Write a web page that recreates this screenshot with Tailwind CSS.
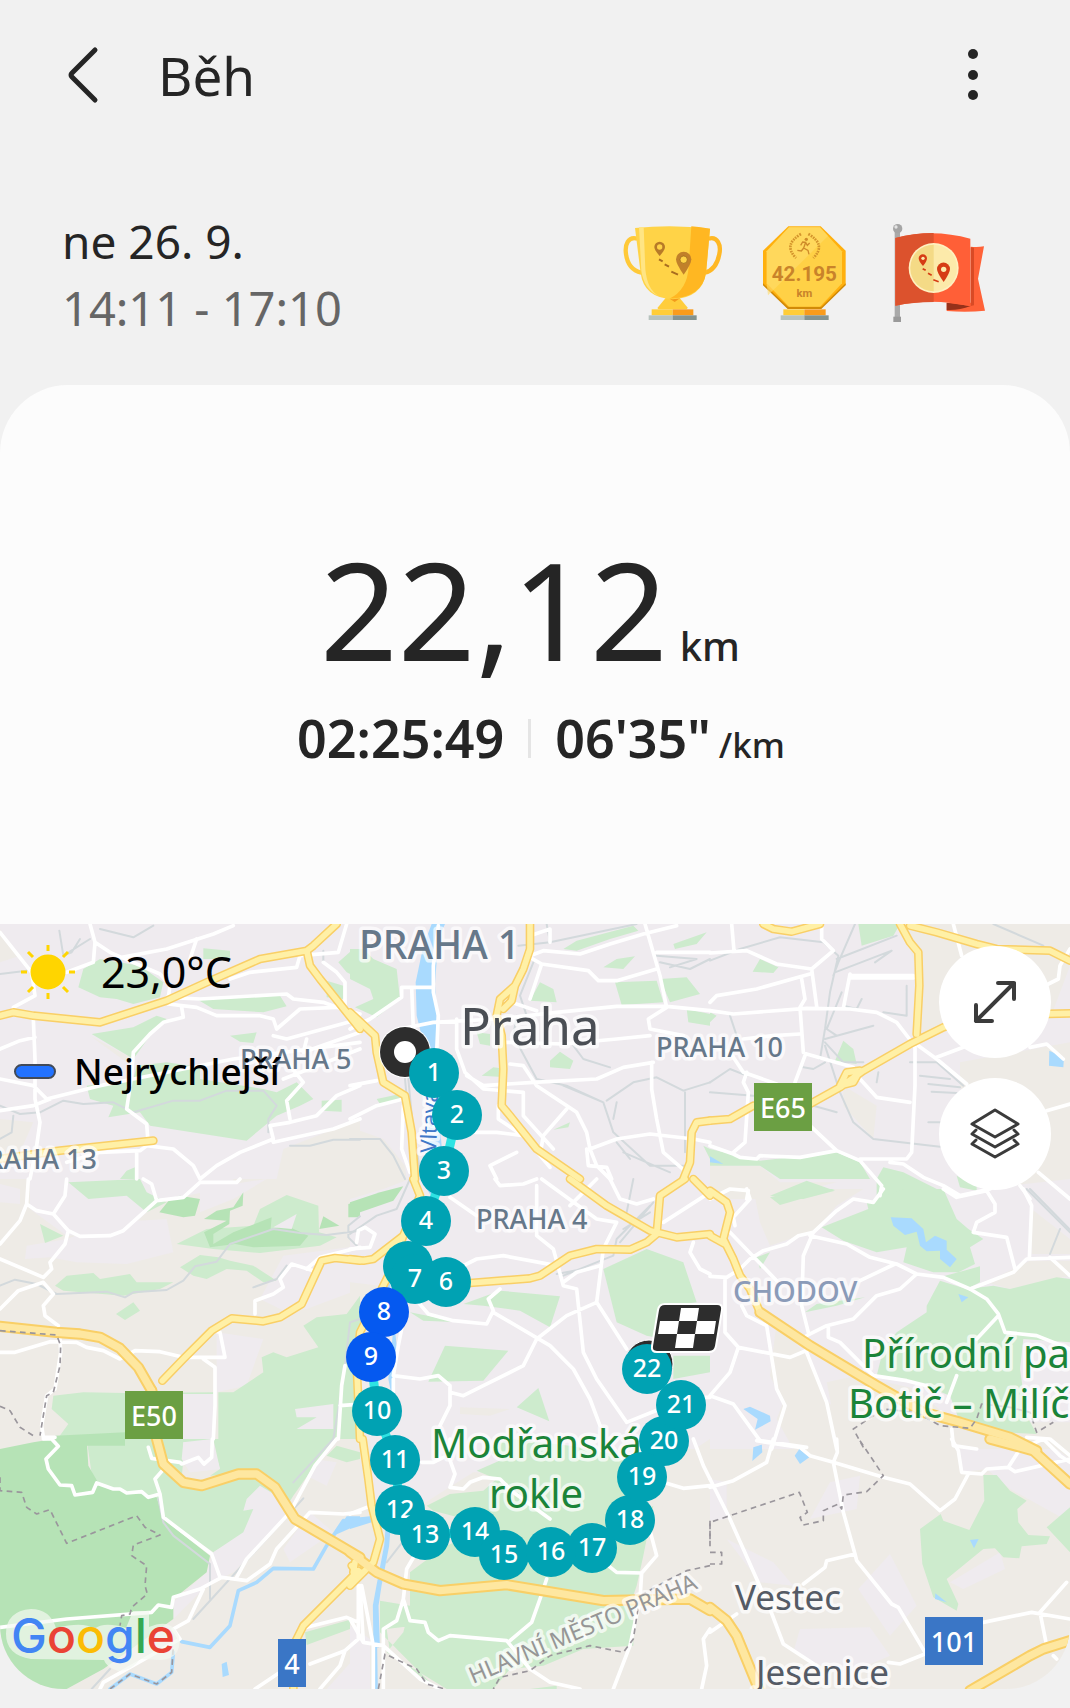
<!DOCTYPE html>
<html lang="cs">
<head>
    <meta charset="UTF-8">
    <meta name="viewport" content="width=device-width, initial-scale=1.0">
    <title>Běh</title>
    <script src="https://cdn.jsdelivr.net/npm/@tailwindcss/browser@4"></script>
</head>
<body class="bg-[#f1f1f1] font-['Noto_Sans',sans-serif] text-[#252525]">
    <header class="flex items-center pt-[33px] pl-14 pr-[59px]">
        <button type="button" aria-label="Zpět" class="flex h-[86px] w-[54px] items-center justify-center">
            <svg class="h-[60px] w-[40px]" viewBox="0 0 40 60" fill="none" stroke="#252525" stroke-width="5" stroke-linecap="round" stroke-linejoin="round"><path d="M32 4L9 27Q7 29 9 31L32 54"/></svg>
        </button>
        <h1 class="ml-12 flex-1 text-[53px] leading-[86px]">Běh</h1>
        <button type="button" aria-label="Další možnosti" class="flex h-[86px] w-[76px] items-center justify-center">
            <svg class="h-[60px] w-3" viewBox="0 0 12 60" fill="#252525"><circle cx="6" cy="8" r="5"/><circle cx="6" cy="29" r="5"/><circle cx="6" cy="49" r="5"/></svg>
        </button>
    </header>

    <section class="flex items-start justify-between pt-[89px] pb-[43px] pl-[62px] pr-[78px]">
        <div class="leading-[67px]">
            <p class="text-[46px]">ne 26. 9.</p>
            <p class="text-[47px] text-[#666666]">14:11 - 17:10</p>
        </div>
        <div class="mt-3 flex gap-[30px]">
            <!-- trophy -->
            <svg class="size-[104px]" viewBox="60 60 312 312">
                <path d="M112 116C84 108 74 134 78 162C82 194 98 212 124 218" fill="none" stroke="#ffc938" stroke-width="13"/>
                <path d="M326 116C352 108 364 134 358 162C352 194 340 212 314 218" fill="none" stroke="#ffb824" stroke-width="13"/>
                <path d="M200 290H236L262 322Q264 328 256 328H180Q170 328 174 322z" fill="#ffcd3c"/>
                <path d="M202 292H244L224 306z" fill="#f29a1c"/>
                <path d="M105 84Q218 72 330 86L318 220Q306 294 218 298Q132 294 122 220z" fill="#ffd347"/>
                <path d="M274 79Q304 81 330 86L318 220Q306 294 208 296Q262 270 266 200z" fill="#ffb722"/>
                <path d="M117 82L131 81 136 208Q142 270 176 288Q132 268 124 212z" fill="#ffe584"/>
                <path d="M155 328H218V346H155z" fill="#ffcd38"/>
                <path d="M218 328H280V346H218z" fill="#f99b1c"/>
                <path d="M146 346H218V360H146z" fill="#b7c3bf"/>
                <path d="M218 346H290V360H218z" fill="#849390"/>
                <path d="M179 168Q163 150 163 141A16 16 0 0 1 195 141Q195 150 179 168z" fill="#b77a28"/>
                <circle cx="179" cy="141" r="8" fill="#ffd347"/>
                <path d="M251 224Q228 192 228 178A23 23 0 0 1 274 178Q274 192 251 224z" fill="#c1802a"/>
                <circle cx="251" cy="179" r="11" fill="#ffd347" stroke="#8f5d1a" stroke-width="2"/>
                <path d="M177 178L188 184M194 193L207 200M214 215L234 224" stroke="#a86d20" stroke-width="6"/>
            </svg>
            <!-- marathon badge -->
            <svg class="size-[104px]" viewBox="462 60 312 312">
                <path d="M565 79H662L737 152V254L664 324H563L489 254V152z" fill="#ffb00e"/>
                <path d="M489 250L564 320H664L737 250V256L664 327H563L489 256z" fill="#d18a08"/>
                <path d="M567 82H660L726 154V250L660 320H567L500 250V154z" fill="#ffd146"/>
                <path d="M567 82H660L684 108 504 286 500 250V154z" fill="#ffdc6b" opacity=".6"/>
                <path d="M603 102Q548 134 588 174M625 102Q680 134 640 174" fill="none" stroke="#d4942c" stroke-width="8" stroke-dasharray="5 3"/>
                <circle cx="619" cy="118" r="5" fill="#cf8b29"/>
                <path d="M602 136L608 126 617 127 611 144 624 151 627 163M611 144L604 153 592 151M617 128L622 136 629 129" fill="none" stroke="#cf8b29" stroke-width="4"/>
                <text x="613" y="242" text-anchor="middle" class="fill-[#c9832a] font-['Roboto',sans-serif] text-[62px] font-bold">42.195</text>
                <text x="613" y="290" text-anchor="middle" class="fill-[#c9832a] font-['Roboto',sans-serif] text-[34px] font-bold">km</text>
                <path d="M550 328H613V346H550z" fill="#ffcd38"/>
                <path d="M613 328H677V346H613z" fill="#f99b1c"/>
                <path d="M542 346H613V360H542z" fill="#b7c3bf"/>
                <path d="M613 346H686V360H613z" fill="#849390"/>
            </svg>
            <!-- route flag -->
            <svg class="size-[104px]" viewBox="864 60 312 312">
                <path d="M884 92H900V352H884z" fill="#a9a9a9"/>
                <path d="M880 350H903V366H880z" fill="#9a9a9a"/>
                <circle cx="893" cy="86" r="14" fill="#a5a5a5"/>
                <circle cx="888" cy="81" r="5" fill="#e4e4e4"/>
                <path d="M1112 140Q1132 143 1152 139L1134 236 1155 332Q1100 338 1040 333V308H1112z" fill="#ff6238"/>
                <path d="M1112 142L1122 143V316L1112 318z" fill="#d94a25"/>
                <path d="M1040 308L1112 318Q1076 332 1040 330z" fill="#96311a"/>
                <path d="M886 114Q998 84 1111 116V319Q998 292 886 317z" fill="#ff5f37"/>
                <path d="M886 114Q940 99 1001 99V306Q940 306 886 317z" fill="#dc522d"/>
                <circle cx="1001" cy="204" r="75" fill="#fff0c0"/>
                <circle cx="1001" cy="204" r="70" fill="#fceaaa"/>
                <path d="M1001 134A70 70 0 0 0 1001 274z" fill="#f4da86"/>
                <path d="M969 198Q956 184 956 175A12 12 0 0 1 981 175Q981 184 969 198z" fill="#d63c14"/>
                <circle cx="969" cy="175" r="5" fill="#fceaaa"/>
                <path d="M1031 246Q1011 218 1011 207A19 19 0 0 1 1050 207Q1050 218 1031 246z" fill="#d63c14"/>
                <circle cx="1031" cy="208" r="8" fill="#fceaaa"/>
                <path d="M968 206L977 211M984 220L995 226M1000 239L1016 245" stroke="#d63c14" stroke-width="5"/>
            </svg>
        </div>
    </section>

    <main>
        <section class="flex flex-col items-center rounded-t-[68px] bg-[#fcfcfc] pt-[156px] pb-[150px]">
            <p class="flex items-baseline pr-[10px] leading-[136px]">
                <span class="text-[136px]">22,12</span>
                <span class="ml-3 text-[40px] leading-none font-medium">km</span>
            </p>
            <p class="mt-[25px] flex items-baseline pl-3 text-[52px] leading-[72px] font-semibold">
                <span>02:25:49</span>
                <span class="mx-6 h-[39px] w-[3px] bg-[#e5e5e5]"></span>
                <span>06'35"</span>
                <span class="ml-2 text-[35px] leading-none font-medium">/km</span>
            </p>
        </section>

        <section class="relative overflow-hidden rounded-b-[64px] bg-[#eeebe6]">
            <svg id="map" class="block h-auto w-full" viewBox="0 925 1070 765" role="img" aria-label="Mapa trasy">
                <g id="terrain"></g>
                <g id="labels"></g>
                <g id="route">
                    <path d="M405 1053L434 1074 457 1116 444 1172 426 1222 408 1267 446 1283 416 1280 384 1313 371 1358 377 1412 395 1461 400 1511 425 1536 475 1533 504 1556 551 1553 592 1549 630 1521 642 1478 664 1442 681 1406 647 1370" fill="none" stroke="#2ee3e3" stroke-width="9"/>
                    <circle cx="405" cy="1053" r="26" fill="#fff"/>
                    <circle cx="405" cy="1053" r="25" fill="#2d2d2d"/>
                    <circle cx="405" cy="1053" r="11" fill="#fff"/>
                    <circle cx="649" cy="1365" r="24" fill="#2d2d2d" stroke="#fff" stroke-width="1"/>
                </g>
                <g id="markers"></g>
                <!-- finish flag -->
                <path d="M665 1305H717Q723 1305 722 1311L716 1347Q715 1353 709 1353H657Q651 1353 652 1347L658 1311Q659 1305 665 1305z" fill="#2d2d2d" stroke="#fff" stroke-width="2"/>
                <path d="M681 1309H699L697 1322H679zM660 1322H679L677 1335H658zM697 1322H716L714 1335H695zM677 1335H695L693 1349H675z" fill="#fff"/>
                <!-- halo under the logo -->
                <g fill="#f3f8f1" fill-opacity=".7"><path d="M31 1610Q50 1610 56 1629Q84 1622 94 1630Q104 1622 126 1629L133 1612H149V1628Q172 1618 179 1638Q182 1660 160 1661L140 1660Q132 1672 118 1672Q106 1668 104 1661L31 1660Q6 1656 6 1635Q6 1612 31 1610z"/></g>
                <text x="11" y="1654" class="font-['Inter',sans-serif] text-[48px] font-medium"><tspan fill="#4285f4">G</tspan><tspan fill="#ea4335">o</tspan><tspan fill="#fbbc05">o</tspan><tspan fill="#4285f4">g</tspan><tspan fill="#34a853">l</tspan><tspan fill="#ea4335">e</tspan></text>
            </svg>

            <div class="absolute top-4 left-5 flex items-center gap-[25px] text-[43px] leading-[64px] text-black">
                <svg class="size-14" viewBox="0 0 56 56" fill="#ffd500" stroke="#ffd500" stroke-width="3"><circle cx="28" cy="28" r="16"/><path d="M28 1v6M28 49v6M1 28h6M49 28h6M8 8l5 5M43 43l5 5M8 48l5-5M43 13l5-5"/></svg>
                <span>23,0°C</span>
            </div>
            <div class="absolute top-[117px] left-[14px] flex items-center gap-[18px] text-[37px] leading-[60px] font-medium text-black">
                <span class="h-[15px] w-[42px] rounded-full border-2 border-[#424a58] bg-[#2272ff]"></span>
                <span>Nejrychlejší</span>
            </div>
            <div class="absolute top-[22px] right-[19px] flex flex-col gap-5">
                <button type="button" aria-label="Zvětšit mapu" class="flex size-28 items-center justify-center rounded-full bg-white">
                    <svg class="size-12" viewBox="0 0 48 48" fill="none" stroke="#3b3b3b" stroke-width="4" stroke-linecap="round" stroke-linejoin="round"><path d="M5 43L43 5M27 5H43V21M5 27V43H21"/></svg>
                </button>
                <button type="button" aria-label="Vrstvy mapy" class="flex size-28 items-center justify-center rounded-full bg-white">
                    <svg class="size-[52px]" viewBox="0 0 52 52" fill="none" stroke="#3b3b3b" stroke-width="3" stroke-linejoin="round" stroke-linecap="round"><path d="M26 2L49 16 26 29 3 16z"/><path d="M7 22L3 26 26 39 49 26 45 22M7 32L3 36 26 49 49 36 45 32"/></svg>
                </button>
            </div>
        </section>
    </main>
    <footer class="h-[18px]"></footer>

    <script>
        // every tile is drawn at three times the map scale, x and y are its corner on the map
        const tiles = [
            {
                x: 0, y: 920,
                town: 'M0 0H1080V780H0z',
                field: 'M830 780L850 690 1080 600V780zM0 600L100 610 60 700 0 720zM0 30L60 110 0 130zM270 350L400 420 380 430z',
                park: 'M250 150L300 120 420 140 490 190 480 235 400 255 350 240 300 235 235 205zM610 88L690 95 690 120 610 120zM590 240L840 230 860 262 790 280 640 270zM275 345L400 325 470 290 500 300 450 350 400 420zM410 440L500 430 600 445 600 480 790 510 830 520 890 490 940 540 900 560 830 590 740 665 450 620 420 580 325 595 340 560 270 540 260 500 400 480zM690 350L770 340 760 372 720 368zM965 545L1025 542 1025 578 965 575zM1015 130L1060 90 1080 95V180L1040 160zM980 185L1030 200V240L980 235zM360 780L380 755 405 745V780z',
                rail: 'M178 35L190 110 215 100 240 60M190 110L270 60M0 165L80 155M300 30L400 55 460 20M0 560L60 585 120 580 190 545 250 555 340 550 400 580 520 545 600 545 680 515 790 515 830 560 805 600V640M870 680L930 680 1000 662H1080M0 660L35 640 40 590M970 95V130',
                street: 'M0 40L95 160 105 230 40 265M270 15L285 70 280 130 200 160M285 70L330 100 365 115 480 165 510 200 505 235M365 115L500 90 640 45 700 20M590 60L570 120M500 235L600 240 860 225 880 240 970 250 1010 265 1080 285M505 255L590 265 650 290 780 290 820 300 830 330 900 270 1010 265M545 265L550 295 490 310 450 345 400 400 395 470 380 570 440 615 445 680M0 390L60 365 105 355M100 300L105 420 105 540 120 610 110 680 90 780M0 480L100 500 140 540 300 500 400 480 700 420 1080 370M0 575L100 560 150 540M820 350L860 360 1080 300M1040 15L1015 100 900 110 890 145 750 160 690 180M970 130L1010 160 1035 190 1035 265M1080 500L1010 530 950 590 870 610 810 620 820 660 720 700 650 740 600 780M820 670L1000 630 1080 600M870 440L910 490 860 545 870 600M200 730L300 700 420 695 440 680 520 690 580 740 600 780M410 695V780M920 360L910 400 1080 340M850 480L1080 390',
                road: 'M0 290L40 280 100 290 300 310 500 245 620 190 780 120 920 95 940 80 1010 15M920 95L930 140 960 180 1080 330M0 720L180 695 460 665'
            },
            {
                x: 350, y: 920,
                town: 'M0 0H1080V780H0z',
                field: 'M0 625L100 660 165 740 170 780H0z',
                park: 'M0 90L40 90 70 120 140 150 150 240 80 295 15 265 70 240 60 210 0 180zM640 90L680 65 850 20 865 35 780 60 680 95zM970 75L1070 40 1040 75 975 90zM760 145L800 120 855 112 820 150zM795 190L920 185 940 250 815 258zM930 180L1010 175 1050 225 960 250zM1010 270L1080 285V320L1015 310zM570 190L610 210 620 250 540 245zM600 425L630 398 670 425 660 450 600 445zM395 470L430 445 470 450V475zM610 632L660 610 655 625zM380 340L420 345 420 380 390 375zM80 540L150 525 160 545 90 555zM1060 680L1080 690V720z',
                water: 'M245 15H285L265 60 255 195 260 290 258 400 262 540 275 680 280 780H225L235 640 240 540 225 390 200 290 197 190 220 80z',
                rail: 'M550 130L510 230 530 290M500 290L490 350 560 480 650 500 760 550 790 640 900 740 1000 740M640 500L760 550M505 80L600 70 860 15M590 15L600 70M670 380L700 420 780 445M770 545L850 490 920 475 1000 515 1080 490M1005 520V700M920 110L1040 120 960 145M930 130L1020 150 1080 120M165 480L180 640 205 780M175 480L190 640 215 780M0 660H90L130 710 165 780M820 700L960 760M800 670L840 720M800 550L790 600',
                street: 'M540 110L580 95 690 105 780 75 880 45 980 20M540 115L575 135 715 155 745 185 800 185 920 150M575 135L540 240M885 15L930 170 950 265M920 100H1080M0 330L60 300 155 235 155 205H250M185 205L190 330M265 20L250 140V220L265 290 260 400M150 330L250 310 440 300 620 280 800 262 950 262 1080 275M950 265L895 300 900 330 1000 350M470 245L560 275M320 300L320 390 345 460 400 510 520 520 520 590 610 690M470 370L640 375 800 360 900 350M480 435L520 440 560 500 680 580 710 640 720 690 740 740 780 780M0 500L80 485M350 470L400 500 550 490 740 480 820 445 910 430M905 430V510L920 600 940 700 1010 760M375 640H440L520 650M650 570L580 650 570 710M0 600L80 560 160 540M720 690L800 660 900 645 1030 660M445 560V600L520 650 600 745M420 740L500 700M420 740L440 780M710 690L715 740 770 745 785 780M600 70V30L540 50M160 560L155 690 180 760M1030 660L1080 670',
                road: 'M540 15V90L520 150 495 200 450 240 440 290 455 350 460 450 455 560 480 590 560 690 690 780M495 200L485 245 460 270M0 280L75 350 80 400 100 490 165 530 185 640 195 780M1080 605L1040 610 1025 640 1020 730 1000 780'
            },
            {
                x: 710, y: 920,
                town: 'M0 0H1080V840H0z',
                field: 'M570 15H1080V140L1020 300 700 310 630 350 640 200zM750 430L1080 370V780L900 800 750 500zM400 500L500 560 490 660 400 560zM0 740L150 740 210 790 380 790 180 840H0z',
                park: 'M445 15H570L550 50 455 80zM150 120L205 145 190 162 128 158zM400 365L430 390 440 435 375 425zM0 280L20 290 0 310zM0 690L150 725 380 700 450 730 480 780 390 780 210 780 150 740 0 740zM180 830L290 785 375 815 280 840zM520 745L580 760 700 820 700 840H500V780zM740 770L800 800V815L750 805z',
                water: 'M0 712L40 735 0 730zM1018 395L1062 415 1060 445 1017 440z',
                rail: 'M0 125L90 90 210 55 340 70 385 110 360 220 345 330 330 420M435 15L385 130 370 170M375 160L545 95 495 130M380 120L560 50M850 15L1000 80M600 430H680L760 500M630 470L720 480M655 495L750 505M665 518L740 522M345 360L490 320M345 370L400 430 460 430M60 290L90 380M345 380L390 520 430 610 490 660 690 683M590 200V290L520 280M395 220L350 330 380 350M0 520L130 530M0 490L60 450 110 470M310 560L380 580M280 445L310 450 345 430M455 240L440 270 400 260M505 460L500 490M655 610H690',
                street: 'M65 15L72 95M0 102L110 95 200 135 305 150 370 95 335 60V15M0 250L20 230 140 210 300 165M305 150L320 262M275 180L285 240 270 265M0 275L70 285 290 268 420 270 500 280 560 310 610 375M400 268L420 165M420 170H610M420 177H610M270 265L280 400 290 405 430 445M100 360L190 350 270 345M285 410L255 490M0 380L60 400 100 460 200 495M110 460L100 490 115 520 105 670 70 700M450 480L500 535 600 550M625 380L680 420 770 495M615 385V500L605 700 590 720 450 720M0 680L70 705 90 715 140 720 150 710 270 715 380 695 300 620M380 695L450 725 515 800 510 830M540 730L580 735 640 775 700 800 750 830 840 810M680 415L760 385M960 385L1010 375 1060 420M730 15L755 110M1010 575L1080 555M1015 195L1045 180 1050 140 1080 90M985 760L1080 840M930 800L960 840M0 840L60 810 115 815 110 840',
                road: 'M160 15L190 30 245 38 330 15M570 15L600 70 625 100 628 200 620 345M600 20L680 40 800 75 860 90 1020 95 1080 125M0 605L60 600 130 560M300 555L390 505 460 455 600 375 700 325 800 290 1080 283M390 500L410 460 450 455 430 490z'
            },
            {
                x: 0, y: 1180,
                town: 'M90 0H700V20L470 70 380 160 200 170 90 90zM340 130L500 120 520 220 380 255 230 250 150 235 75 240 80 200 200 180zM600 30L800 0 700 60 600 100zM850 230L1080 200V330L920 390 860 400 780 360zM650 460L790 480 740 620 650 640zM0 15L60 30 60 75 0 70z',
                park: 'M205 10L420 0 440 40 500 70 440 100 380 50 265 60zM120 135L190 170 135 192zM165 320L200 290 280 282 300 300 390 285 410 310 520 310 480 330 370 350 190 335zM540 265L600 228 655 235 690 245 760 260 830 305 790 310 740 275 680 270 620 300 580 290zM530 195L620 150 760 140 780 90 860 48 955 80 957 160 1010 175 960 200 780 222 640 210zM348 405L400 370 420 395 375 423zM910 440L950 415 1040 405 1080 350V780H655V640L700 640 790 580 785 535 820 520 860 535 955 505zM160 650L250 640 375 642 640 640V790H165L205 735 155 690z',
                forest: 'M478 100L510 60 540 50 600 60 585 110 550 115zM612 120L650 95 700 85 730 40 728 80 690 95 688 135 640 165 640 195 700 160 815 115 812 150 860 140 925 170 900 200 760 205 705 195 630 205 612 160 680 125zM958 150L970 112 1018 140zM1045 75L1080 65V115H1045zM165 770L375 760V800H165z',
                yard: 'M885 690L1000 675 1000 750 890 750 950 715 890 715zM380 645H640V780H500L380 760zM820 145L890 105 875 150z',
                rail: 'M0 320L45 302 110 315 170 345 320 338 375 355 400 340 500 333 550 305 585 262 650 248 690 195 820 150 900 162 980 168 1080 155M760 325L830 300 860 260M1045 175V140L1080 112M1045 175L1070 200M1080 420L1050 430 1030 600 1000 780',
                street: 'M85 0L80 75 60 125 0 195M80 75L110 95 160 105 205 155 195 195 150 250 155 270 130 295 0 240M160 105L195 50 200 0M205 155L240 172 330 170 370 155 470 65 455 15 430 0M470 65L550 55 600 10H710L720 0M0 390L55 335 130 310 160 345 130 380 135 410 175 440M0 520H45L150 488 230 490 260 505 310 515 360 540 405 515 480 518 550 535 675 535 660 460 640 455M610 540L645 565V680L640 780M180 480L182 520 165 630 140 650 125 740 130 775H165M920 270L960 235 1080 205M940 275L875 255 840 300 850 325 820 345 765 365V405M1020 680L1060 677M1035 560L1025 620 1015 780',
                road: 'M487 605L550 540 635 455 695 418 790 427 840 415 905 375 965 245 1005 237 1080 245',
                motorway: 'M0 442L170 460 240 465 300 475 360 508 415 565 455 635',
                border: 'M0 455L170 468 182 500 180 560 160 640 140 650 120 770M0 682L30 695 60 745 100 770'
            },
            {
                x: 350, y: 1180,
                town: 'M0 0H1080V780H0z',
                field: 'M0 0H180L100 30 0 60zM0 310L90 320 0 480zM330 685L480 690 420 710 330 705z',
                park: 'M760 270L890 210 1000 250 1040 370 960 380 940 480 890 470 800 430zM340 375L450 335 630 352 600 445 510 395 400 380zM180 400L330 430 220 425zM285 500L475 515 400 605 235 608zM500 685L565 627 598 727zM970 530H1080V580L970 600zM0 480V780H20V620zM30 380L130 330 20 440z',
                forest: 'M0 70L90 40 160 22 130 65 0 110z',
                water: 'M230 30L270 50 250 60zM120 310L100 340 130 450 115 600 125 650 140 500z',
                rail: 'M180 0L140 90 80 110 0 165M900 80L800 180 790 230 640 290M910 70L810 190M850 0L830 100M820 150L900 100M700 270L620 285',
                street: 'M20 190L25 155 45 145 75 165 60 205 0 210M435 0L450 20 520 15 560 0M300 55L380 110M560 20V170L610 210 640 320 680 330 700 520 740 600 830 730M575 0L740 120 800 130 760 210 740 370 650 410 560 480 520 560 400 620 340 650 300 640M660 80L740 0M780 0L810 60 860 75 910 60M330 265L380 240 460 230 620 260M640 310L680 280 750 260M205 370L235 405 310 425 410 435 430 395 415 360 450 330M430 400L600 500 670 570 720 660 750 740M740 370L830 510M155 450L145 500 130 590 210 600 265 590 300 620V680L270 740M130 600V680M830 730L930 690M940 130L1080 40M1030 190L1020 220 1050 270 1080 285M1050 655H1080',
                road: 'M660 0L770 80 900 155 980 175 1080 165M360 312L540 298 570 290 660 230 740 210 840 212 890 190 920 165 930 50 1005 0M1030 0L1080 50M190 0L210 50 160 170 70 240 40 245 0 240M160 170L130 260 30 460 20 560 30 780'
            },
            {
                x: 710, y: 1190,
                town: 'M0 0H1080V780H0z',
                field: 'M130 0H460L380 50 320 120 240 150 180 170 150 100zM830 280L960 215 1080 215V260L900 300zM965 60L1080 150V195H965zM200 400L290 500 340 620 390 680V780H250L200 690 220 640 180 560zM350 580L440 560 620 600 730 700 1080 700V780H390L370 680z',
                park: 'M180 25L290 0H375L210 48zM335 115L475 60 470 40 530 20 580 0 700 0 740 90 775 120 820 150 780 175 795 225 745 250 670 250 580 220 590 175 500 190 400 155zM650 350L690 275 770 300 850 290 900 300 1040 265 1080 270V460L940 450 930 540 950 680 980 735 880 730 750 700 720 620 620 580 500 560 520 480 560 430 650 370zM745 250L810 232V280L770 300 700 262zM140 205L180 190 150 240zM285 370L320 345 465 325 380 350z',
                water: 'M542 85L605 88 640 120 648 160 675 140 710 155V182L740 210 720 235 690 210V185L650 187 630 170 620 128 585 138 550 110zM745 315L775 325 755 340zM100 660L120 653 180 680 182 697 135 722 143 690zM130 780L155 767V780z',
                rail: 'M950 0L1080 130M960 0L1080 122M1050 120L1020 195',
                street: 'M520 0L490 40 430 30 380 65 310 130 265 140 230 165 160 185 120 210 90 240 50 265 0 262M60 130L200 275M110 0L120 30 70 85 75 110M300 140L410 165 480 205 560 225 620 255 700 265 780 300 830 330 865 375 885 430 980 440 1080 480M310 130L280 200 275 350 295 430M555 225L450 275M620 255L570 300 500 320 430 390 350 410 290 440M355 410V445L390 460 450 520 490 560 590 575 650 590M700 0L740 25 830 5 855 45V70L800 100 790 130 890 145 915 240M940 0L965 50 958 210M780 300L910 250 950 210 1080 205M1020 205L1080 260M865 380L800 450M740 560L710 640M45 265V430L85 475 240 505 300 480M85 475L60 550 0 620 70 645 150 755 290 775M95 350L110 380 170 410 200 600 225 650 185 780M290 490L350 640 380 780M725 720L730 770 800 780M950 745L1020 750 1080 800',
                road: 'M0 5L50 40 60 70 40 150 70 210 90 260 120 300 150 370 300 470M0 140L45 165',
                motorway: 'M150 370L300 470 500 590 640 670 750 700 900 745 980 785',
                border: 'M460 775L430 720 460 700 520 660 620 670 690 710 780 718 800 690 815 645 900 655 960 670 980 730 1030 700'
            },
            {
                x: 0, y: 1440,
                town: 'M740 180L780 130 820 150 870 210 800 300 700 400 620 440 560 500 520 540 520 490 620 400 640 340 730 280 760 210zM940 60L1010 70 980 140 920 110zM550 10L640 0 660 90 570 100 545 60zM850 330L930 220 1000 280 870 370zM1080 640L980 750H1080z',
                park: 'M260 0H470L490 70 550 120 610 130 740 110 790 130 830 40 900 0H1000L880 170 830 250 690 310 640 340 490 235 470 175 420 165 280 140zM480 0H550V60L545 120 490 70zM640 0H1000L850 150 780 130 740 100 630 110 660 90zM980 50L1010 20 1080 40V60L1040 70zM915 580L1050 542V570L920 618z',
                yard: 'M740 180L780 140 830 170 860 230 700 400 640 400 640 340 730 280 760 210 730 215zM550 10L635 0 660 90 570 100 545 60z',
                forest: 'M0 30L100 10 160 0 260 0 265 80 300 140 470 175 490 240 630 350 620 400 520 480V540L310 690 200 750H0z',
                water: 'M1040 232L1080 232V255L1000 290zM665 675L680 668 687 708 668 714z',
                river: 'M545 608L630 625 690 560 715 455 770 430 820 388 940 390 980 320 1030 245 1080 250M330 750L390 705 470 735 515 700 520 640',
                rail: 'M910 178L580 540M475 180L490 250 520 290 630 375V480M1000 0L880 130M275 750L330 690',
                street: 'M130 0H155L175 22 138 60 145 90 180 138 215 140 225 168 278 160 290 132 340 150 360 150 380 162 425 158 445 175 480 165M445 25L455 58 540 70 545 75 595 55 612 75 635 55 637 0M500 80L465 120 480 165 490 235 635 345 660 415M0 565L200 540 455 520 475 498 515 505 520 475 600 450 665 415 740 425 810 375 830 330 930 220 1030 225 1080 220M610 450L565 545 520 570 540 600 310 730 300 750M1010 0L945 80 870 220 740 360 710 415M765 750L840 700M920 565L1040 535 1075 550M930 675L1035 635 1075 600V440M1035 635L1020 680 960 750',
                road: 'M1075 395L910 560 885 610 880 750M1065 370L1060 400',
                motorway: 'M455 -145L465 -60 470 0 490 75 550 130 605 140 715 105 770 105 825 145 885 240 1080 355',
                border: 'M0 115V155L65 160 80 205 110 225 150 212 200 313 410 230 435 265 480 288 400 318 395 350 440 380 435 440 442 465 395 505 390 525 365 530 360 560M330 750L390 705 470 735 515 700 520 620'
            },
            {
                x: 350, y: 1440,
                town: 'M60 0H1080L900 120 370 100 290 150 180 220 70 180zM0 560L60 600 60 750H0z',
                field: 'M950 30H1080V750H640L860 600 880 400 930 340z',
                park: 'M180 400L220 370 290 320 420 260 250 215 230 200 300 165 400 155 440 120 380 95 460 60 400 30 480 0 660 20 860 60 880 130 860 230 910 200 880 350 860 440 850 470V620L700 630 580 680 480 690 430 750 290 750 110 640 160 580 180 500zM90 485L180 500 190 560 110 570 120 640 260 750 90 580zM540 750L620 740V750z',
                water: 'M0 238L60 232 65 250 0 270z',
                river: 'M112 270L108 320 85 440 74 500 78 750M116 270L112 320 89 440 80 500 84 620',
                rail: 'M180 280L110 370',
                street: 'M280 55L250 70 215 70M300 0L295 50 315 105 300 145 340 150 360 130 400 115 450 120 490 160 600 240M0 225L50 205M205 330L170 390 160 480 140 545 100 570V750M160 480L180 545 225 550 235 580 265 605 300 590 470 605 540 690 600 730 690 750M590 420L570 480 545 550 480 605M750 360L800 400 875 402 920 350 880 200M875 402L870 480 840 620 790 750M940 130L1000 148 1080 140M1030 0L1060 80 1080 120M0 540L40 610 100 620 210 720 270 750M30 440L40 610M35 440L70 620V750M1080 570L1060 600 1070 680 1055 750',
                road: 'M38 0L55 120 65 200 90 300 70 370 40 400 20 400 5 380M0 440L45 395',
                motorway: 'M0 340L80 400 160 435 270 455 470 437 760 485 1020 480 1080 515',
                border: 'M1080 380L1010 395 960 420 870 470 850 600 820 640 720 620 600 650 540 695 450 715 430 750M85 750L105 645 200 690 230 735 285 750M1080 245V330'
            },
            {
                x: 710, y: 1440,
                town: 'M0 120L50 130 50 240 0 245zM50 300L190 370 250 440 150 430zM360 130L450 110 440 210 300 240zM445 450L540 345 620 500 540 590zM270 570L480 565 540 650 400 710 250 640zM740 20L1000 0 1080 60V250L900 150 830 90 750 100zM720 430L870 340 885 390 760 450z',
                park: 'M820 108H860L900 155 950 185 922 210 925 250 955 288 1020 292 1010 315 935 322 928 358 880 355 855 328 820 330 710 420 745 495 740 515 670 475 637 375 630 270 692 225 700 245 778 273 823 185zM1010 265L1080 205V340z',
                water: 'M130 25L155 17 157 40 127 66zM268 30L298 55 270 75 254 50zM780 303L806 300 792 328zM676 463L710 490 675 480z',
                street: 'M140 5L200 15 270 25 300 50 370 70 520 115 600 135 690 215 735 180 775 105M380 0L382 40 370 70 400 220 435 345 440 365 545 495 565 505 645 640M190 0L170 70 70 125 0 145M0 120L60 240 180 510 220 615 320 680M435 345L350 365 345 385 280 435M0 580L80 525M535 670L570 675 645 645M725 0L745 35 755 100 815 105 830 90 895 85 915 98 1080 60M895 85L930 30 1000 0 1050 50 1080 70M820 550L965 520 1080 540M990 520L1070 430M990 520L1008 610M1030 650L1040 660',
                motorway: 'M840 0L970 35 1080 135M0 505L50 545 80 590 150 760M780 755L960 650 1000 630 1080 605',
                border: 'M450 5L520 110 470 158 400 168 395 210 385 195 340 215V245L280 258 270 235 292 220 268 160 0 250V310M0 340H35V375H0'
            }
        ];

        // painted from the bottom up
        const layers = [
            { key: 'town', css: 'fill-[#efebef]' },
            { key: 'field', css: 'fill-[#eeebe6]' },
            { key: 'park', css: 'fill-[#cdebcd]' },
            { key: 'forest', css: 'fill-[#b6e3b6]' },
            { key: 'yard', css: 'fill-[#efebef]' },
            { key: 'water', css: 'fill-[#a9dafe]' },
            { key: 'river', css: 'fill-none stroke-[#a9dafe] stroke-[11px]' },
            { key: 'rail', css: 'fill-none stroke-[#d3d9dc] stroke-[6px]' },
            { key: 'street', css: 'fill-none stroke-white stroke-[11px]' },
            { key: 'road', css: 'fill-none stroke-[#f9cf66] stroke-[26px]' },
            { key: 'motorway', css: 'fill-none stroke-[#f9cf66] stroke-[34px]' },
            { key: 'road', css: 'fill-none stroke-[#fff0a6] stroke-[17px]' },
            { key: 'motorway', css: 'fill-none stroke-[#fee7a0] stroke-[22px]' },
            { key: 'border', css: 'fill-none stroke-[#9a969c] stroke-[5px]', dash: '17 13' }
        ];

        const labels = [
            { text: 'PRAHA 1', x: 359, y: 960, css: 'fill-[#66788a] text-[39px] font-medium' },
            { text: 'Praha', x: 460, y: 1046, css: 'fill-[#4a4e54] text-[51px]' },
            { text: 'PRAHA 5', x: 240, y: 1070, css: 'fill-[#66788a] text-[27px] font-medium' },
            { text: 'PRAHA 10', x: 656, y: 1058, css: 'fill-[#66788a] text-[27px] font-medium' },
            { text: 'PRAHA 13', x: -30, y: 1170, css: 'fill-[#66788a] text-[27px] font-medium' },
            { text: 'PRAHA 4', x: 476, y: 1230, css: 'fill-[#66788a] text-[27px] font-medium' },
            { text: 'CHODOV', x: 733, y: 1303, css: 'fill-[#8b9bb8] text-[29px] font-medium' },
            { text: 'Přírodní park', x: 862, y: 1369, css: 'fill-[#1b8439] text-[40px]' },
            { text: 'Botič – Milíčov', x: 848, y: 1419, css: 'fill-[#1b8439] text-[40px]' },
            { text: 'Modřanská', x: 431, y: 1459, css: 'fill-[#1b8439] text-[40px]' },
            { text: 'rokle', x: 489, y: 1509, css: 'fill-[#1b8439] text-[40px]' },
            { text: 'Vestec', x: 735, y: 1611, css: 'fill-[#555b65] text-[35px]' },
            { text: 'Jesenice', x: 756, y: 1686, css: 'fill-[#555b65] text-[35px]' },
            { text: 'HLAVNÍ MĚSTO PRAHA', x: 473, y: 1685, angle: -23, css: 'fill-[#969696] text-[23px]' },
            { text: 'Vltava', x: 436, y: 1154, angle: -88, css: 'fill-[#4078c8] text-[22px]' }
        ];

        const shields = [
            { text: 'E65', x: 754, y: 1084, width: 58, css: 'fill-[#6b9f43]' },
            { text: 'E50', x: 125, y: 1392, width: 58, css: 'fill-[#6b9f43]' },
            { text: '4', x: 278, y: 1640, width: 28, css: 'fill-[#3a76c6]' },
            { text: '101', x: 925, y: 1618, width: 58, css: 'fill-[#3a76c6]' }
        ];

        const kilometres = [
            [1, 434, 1074], [2, 457, 1116], [3, 444, 1172], [4, 426, 1222], ['', 408, 1267], [6, 446, 1283],
            [7, 415, 1280], [8, 384, 1313, true], [9, 371, 1358, true], [10, 377, 1412], [11, 395, 1461],
            [12, 400, 1511], [13, 425, 1536], [14, 475, 1533], [15, 504, 1556], [17, 592, 1549], [16, 551, 1553],
            [18, 630, 1521], [20, 664, 1442], [19, 642, 1478], [21, 681, 1406], [22, 647, 1370]
        ];

        const terrain = document.querySelector('#terrain');
        layers.forEach(layer => {
            terrain.innerHTML += tiles.filter(tile => tile[layer.key]).map(tile => `
                <path d="${tile[layer.key]}" transform="translate(${tile.x} ${tile.y}) scale(0.33333)" class="${layer.css}"
                    stroke-linejoin="round" stroke-linecap="${layer.dash ? 'butt' : 'round'}" stroke-dasharray="${layer.dash || 'none'}"/>
            `).join('');
        });

        document.querySelector('#labels').innerHTML = labels.map(label => `
            <text x="${label.x}" y="${label.y}" transform="rotate(${label.angle || 0} ${label.x} ${label.y})" paint-order="stroke"
                stroke-linejoin="round" class="stroke-white/70 stroke-[7px] ${label.css}">${label.text}</text>
        `).join('') + shields.map(shield => `
            <rect x="${shield.x}" y="${shield.y}" width="${shield.width}" height="48" class="${shield.css}"/>
            <text x="${shield.x + shield.width / 2}" y="${shield.y + 35}" text-anchor="middle" class="fill-white text-[27px] font-medium">${shield.text}</text>
        `).join('');

        document.querySelector('#markers').innerHTML = kilometres.map(([km, x, y, fastest]) => `
            <circle cx="${x}" cy="${y}" r="25" class="${fastest ? 'fill-[#0559f0]' : 'fill-[#00a2b3]'}"/>
            <text x="${x}" y="${y + 8}" text-anchor="middle" class="fill-white text-[25px] font-medium">${km}</text>
        `).join('');
    </script>
</body>
</html>
